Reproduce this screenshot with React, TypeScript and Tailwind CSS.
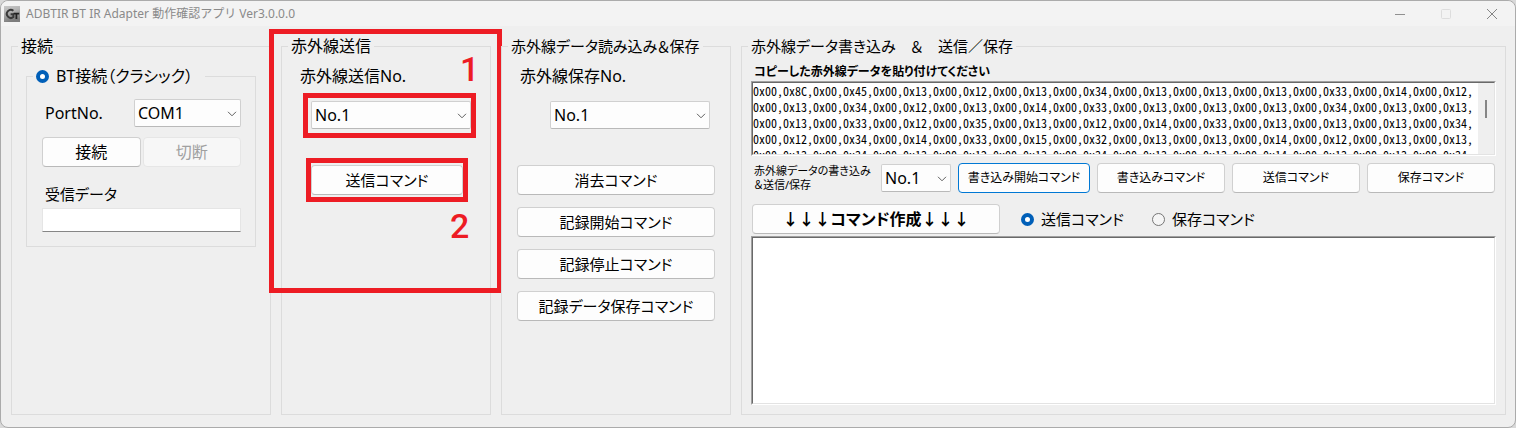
import React, { useState } from "react";

const BASE_DATA = [
  ["8C", "45", "13", "12", "13", "34", "13", "13", "13", "33", "14", "12"],
  ["13", "34", "12", "13", "14", "33", "13", "13", "13", "34", "13", "13"],
  ["13", "33", "12", "35", "13", "12", "14", "33", "13", "13", "13", "34"],
  ["12", "34", "14", "33", "15", "32", "13", "13", "14", "12", "13", "13"],
  ["13", "34", "13", "12", "13", "34", "13", "13", "14", "13", "13", "34"],
];

const IR_DATA = BASE_DATA.map((row) => row.map((v) => `0x00,0x${v},`).join("")).join("\n");

function Group({
  title,
  className = "",
  legendClassName = "pr-[3px]",
  children,
}: {
  title: React.ReactNode;
  className?: string;
  legendClassName?: string;
  children: React.ReactNode;
}) {
  return (
    <fieldset className={`relative flex min-w-0 flex-col border border-[#dcdcdc] ${className}`}>
      <legend className={`ml-1.5 h-[22px] pl-[3px] leading-[22px] whitespace-nowrap ${legendClassName}`}>{title}</legend>
      {children}
    </fieldset>
  );
}

function Button({
  children,
  className = "",
  tone = "normal",
}: {
  children: React.ReactNode;
  className?: string;
  tone?: "normal" | "focused" | "disabled";
}) {
  const tones = {
    normal: "border-[#d0d0d0] border-b-[#b9b9b9] bg-[#fdfdfd] text-black",
    focused: "border-[#0078d4] bg-[#fdfdfd] text-black",
    disabled: "border-[#e6e6e6] bg-[#f7f7f7] text-[#a0a0a0]",
  };
  return (
    <button
      type="button"
      disabled={tone === "disabled"}
      className={`flex h-[30px] items-center justify-center rounded border whitespace-nowrap ${tones[tone]} ${className}`}
    >
      {children}
    </button>
  );
}

function Select({ id, options, className = "" }: { id: string; options: string[]; className?: string }) {
  return (
    <div className={`relative ${className}`}>
      <select
        id={id}
        className="h-7 w-full appearance-none rounded-xs border border-[#d0d0d0] border-b-[#b9b9b9] bg-[#fdfdfd] pl-[3px] leading-6"
      >
        {options.map((o) => (
          <option key={o}>{o}</option>
        ))}
      </select>
      <svg viewBox="0 0 10 6" className="pointer-events-none absolute top-3 right-1 h-1.5 w-2.5" fill="none" stroke="#606060">
        <path d="M1 0.8 L5 4.8 L9 0.8" />
      </svg>
    </div>
  );
}

function Radio({ name, label, checked, onChange }: { name: string; label: string; checked: boolean; onChange: () => void }) {
  return (
    <label className="flex items-center gap-[7px]">
      <input
        type="radio"
        name={name}
        checked={checked}
        onChange={onChange}
        className="size-[13px] appearance-none rounded-full border border-[#767676] bg-[#f5f5f5] checked:border-4 checked:border-[#005fb8] checked:bg-white"
      />
      {label}
    </label>
  );
}

function AppIcon() {
  return (
    <svg viewBox="0 0 16 16" className="size-4">
      <defs>
        <linearGradient id="plate" x1="0" y1="0" x2="0.3" y2="1">
          <stop offset="0" stopColor="#c9c9c9" />
          <stop offset="0.4" stopColor="#b4b4b4" />
          <stop offset="1" stopColor="#7c7c7c" />
        </linearGradient>
      </defs>
      <rect width="16" height="16" fill="url(#plate)" />
      <path d="M9.4 4.8 A4 4 0 1 0 9.4 11 L9.4 8.2 L6.6 8.2" fill="none" stroke="#3a3a3a" strokeWidth="2" />
      <path d="M9.6 7.6 H15.2 M12.4 7.6 V13" fill="none" stroke="#222222" strokeWidth="1.8" />
    </svg>
  );
}

function TitleBar() {
  return (
    <header className="flex h-[25px] items-center rounded-t-lg bg-[#f3f3f3] pr-[17px] pl-[3px]">
      <AppIcon />
      <h1 className="ml-1.5 text-xs whitespace-nowrap text-[#8a8a8a]">ADBTIR BT IR Adapter 動作確認アプリ Ver3.0.0.0</h1>
      <div className="ml-auto flex items-center gap-[34px]">
        <button type="button" aria-label="最小化">
          <svg viewBox="0 0 12 12" className="size-3" stroke="#909090"><path d="M1 6.5 H11" /></svg>
        </button>
        <button type="button" aria-label="最大化" disabled>
          <svg viewBox="0 0 12 12" className="size-3" fill="none" stroke="#dddddd"><rect x="1.5" y="1.5" width="9" height="9" rx="1" /></svg>
        </button>
        <button type="button" aria-label="閉じる">
          <svg viewBox="0 0 12 12" className="size-3" stroke="#858585"><path d="M1 1 L11 11 M11 1 L1 11" /></svg>
        </button>
      </div>
    </header>
  );
}

const SUNKEN = "border border-t-[#a0a0a0] border-l-[#a0a0a0] border-r-white border-b-white";
const SUNKEN_INNER = "border border-t-[#696969] border-l-[#696969] border-r-[#e3e3e3] border-b-[#e3e3e3] bg-white";

export default function App() {
  const [kind, setKind] = useState("send");
  const numbers = ["No.1", "No.2", "No.3"];

  return (
    <div className="min-h-screen bg-[#d9d9d9] font-['Noto_Sans','Noto_Sans_CJK_JP',sans-serif] text-base text-black">
      <div className="flex min-h-screen flex-col rounded-lg border border-[#ababab] bg-[#efefef]">
        <TitleBar />
        <main className="grid grow grid-cols-[260px_210px_230px_minmax(0,1fr)] gap-2.5 px-2.5 pt-[9px] pr-[9px] pb-3 [font-feature-settings:'palt']">
          <Group title="接続">
            <Group
              title={<Radio name="connection" label="BT接続（クラシック）" checked onChange={() => {}} />}
              className="mx-3.5 mt-2 pb-3.5"
              legendClassName="pr-3"
            >
              <div className="flex flex-col pt-3 pr-3.5 pl-[15px]">
                <div className="flex items-center justify-between">
                  <label htmlFor="port" className="pl-[3px]">PortNo.</label>
                  <Select id="port" options={["COM1", "COM2"]} className="w-[107px]" />
                </div>
                <div className="mt-2.5 grid grid-cols-2 gap-0.5">
                  <Button>接続</Button>
                  <Button tone="disabled">切断</Button>
                </div>
                <label htmlFor="received" className="mt-4 pl-[3px] text-[15px] leading-[22px]">受信データ</label>
                <input
                  id="received"
                  type="text"
                  className="mt-[3px] h-6 border border-[#e5e5e5] border-b-[#868686] bg-white px-1"
                />
              </div>
            </Group>
          </Group>

          <Group title="赤外線送信">
            <label htmlFor="send-no" className="mt-2 pl-[18px] leading-[22px]">赤外線送信No.</label>
            <Select id="send-no" options={numbers} className="mt-3.5 mr-[19px] ml-[29px]" />
            <Button className="mt-9 mr-[27px] ml-[29px] text-[15px]">送信コマンド</Button>
            <div className="pointer-events-none absolute -top-7 -left-[13px] h-[264px] w-[233px] border-[5px] border-[#ed1c24]" />
            <div className="pointer-events-none absolute top-9 left-[21px] h-[45px] w-[173px] border-[5px] border-[#ed1c24]" />
            <div className="pointer-events-none absolute top-[101px] left-6 h-11 w-[162px] border-[5px] border-[#ed1c24]" />
            <span className="absolute -top-2 left-[178px] font-['Roboto',sans-serif] text-[34px] leading-10 font-medium text-[#ed1c24]">1</span>
            <span className="absolute top-[149px] left-[168px] font-['Roboto',sans-serif] text-[34px] leading-10 font-medium text-[#ed1c24]">2</span>
          </Group>

          <Group title="赤外線データ読み込み＆保存" legendClassName="pr-[3px] text-[15px]">
            <label htmlFor="save-no" className="mt-2 pl-[18px] leading-[22px]">赤外線保存No.</label>
            <Select id="save-no" options={numbers} className="mt-3.5 mr-5 ml-12" />
            <div className="mt-9 flex flex-col gap-3 px-[15px] text-[15px]">
              <Button>消去コマンド</Button>
              <Button>記録開始コマンド</Button>
              <Button>記録停止コマンド</Button>
              <Button>記録データ保存コマンド</Button>
            </div>
          </Group>

          <Group title="赤外線データ書き込み　＆　送信／保存" legendClassName="pr-[3px] text-[15px]">
            <div className="flex grow flex-col px-[9px] pb-[9px]">
              <label htmlFor="ir-data" className="mt-1.5 pl-[3px] text-xs leading-[18px] font-bold">
                コピーした赤外線データを貼り付けてください
              </label>
              <div className={SUNKEN}>
                <div className={`flex h-[73px] ${SUNKEN_INNER}`}>
                  <textarea
                    id="ir-data"
                    wrap="off"
                    defaultValue={IR_DATA}
                    className="grow resize-none overflow-hidden font-['Noto_Sans_Mono_CJK_JP','Liberation_Mono',monospace] text-xs leading-4"
                  />
                  <div className="w-4 bg-[#efefef] pt-[17px]">
                    <div className="mx-auto h-[18px] w-0.5 bg-[#868686]" />
                  </div>
                </div>
              </div>
              <div className="mt-[7px] flex items-center gap-[7px] px-px text-xs">
                <label htmlFor="write-no" className="w-[122px] pl-0.5 text-[11px] leading-[14px] whitespace-nowrap">
                  赤外線データの書き込み
                  <br />
                  ＆送信/保存
                </label>
                <Select id="write-no" options={numbers} className="w-[70px] text-base" />
                <Button tone="focused" className="grow">書き込み開始コマンド</Button>
                <Button className="w-32">書き込みコマンド</Button>
                <Button className="w-32">送信コマンド</Button>
                <Button className="w-32">保存コマンド</Button>
              </div>
              <div className="mt-[11px] flex items-center px-px">
                <Button className="w-[248px] font-bold">↓↓↓コマンド作成↓↓↓</Button>
                <div className="ml-[21px] flex gap-7 text-[15px]">
                  <Radio name="kind" label="送信コマンド" checked={kind === "send"} onChange={() => setKind("send")} />
                  <Radio name="kind" label="保存コマンド" checked={kind === "save"} onChange={() => setKind("save")} />
                </div>
              </div>
              <div className={`mt-0.5 flex grow flex-col ${SUNKEN}`}>
                <textarea aria-label="作成したコマンド" className={`grow resize-none ${SUNKEN_INNER}`} />
              </div>
            </div>
          </Group>
        </main>
      </div>
    </div>
  );
}
